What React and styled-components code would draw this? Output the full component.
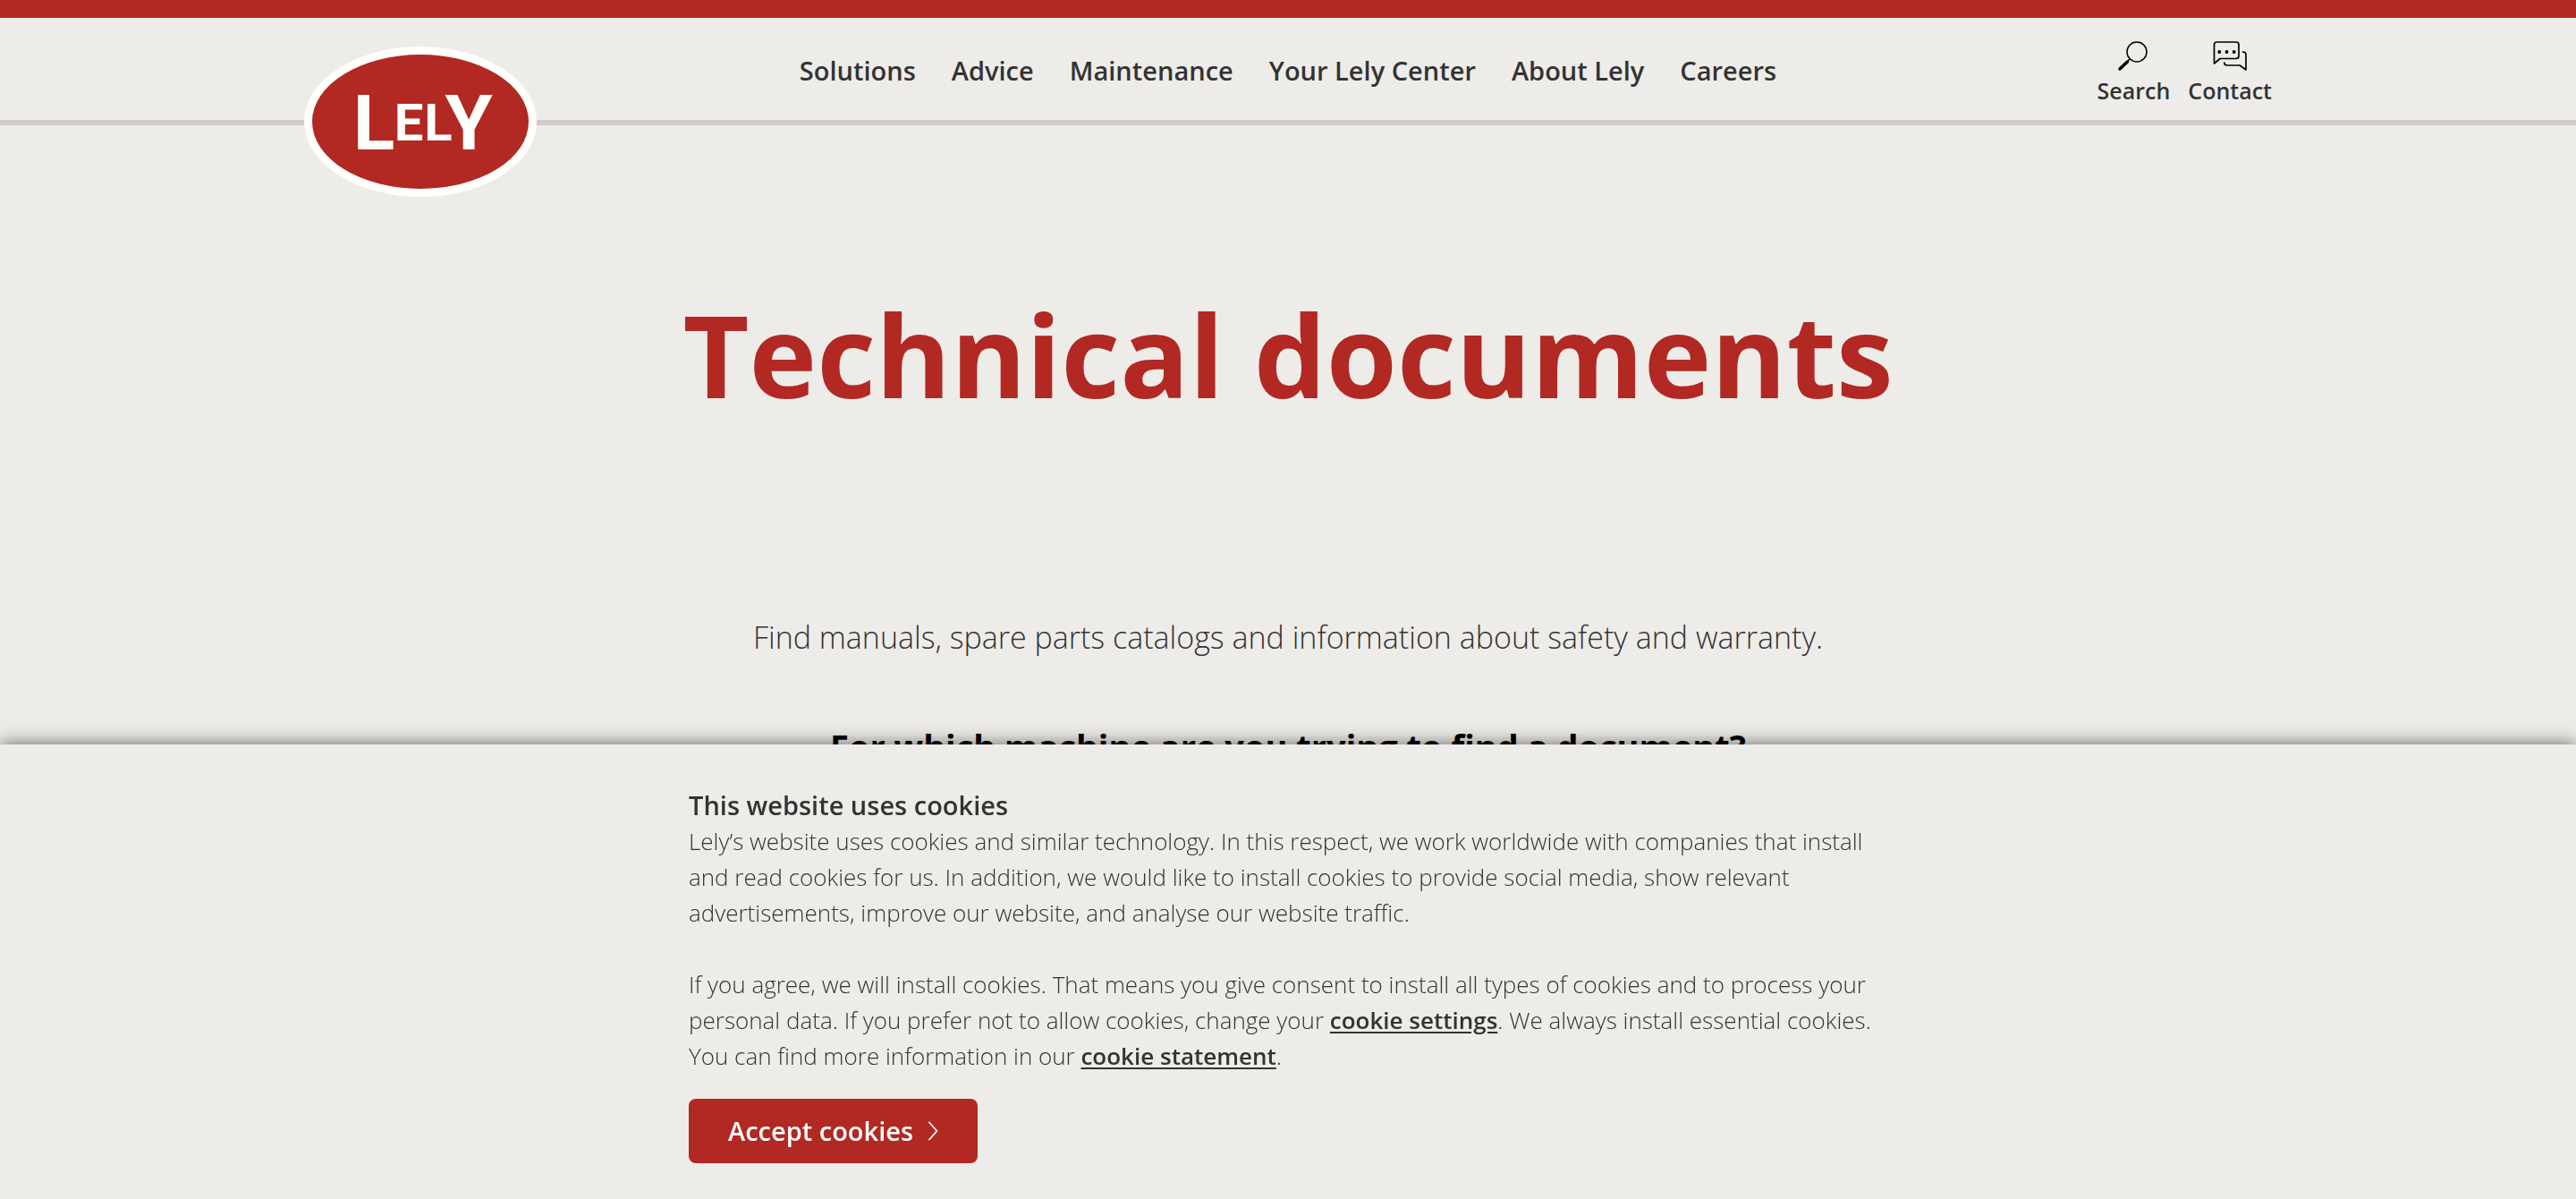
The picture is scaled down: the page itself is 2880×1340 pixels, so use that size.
import React from 'react';
import styled, { createGlobalStyle } from 'styled-components';

const color = {
  red: '#b22822',
  sand: '#eeece8',
  line: '#d0cbca',
  text: '#333333',
  white: '#fffffc',
};

const GlobalStyle = createGlobalStyle`
  *, *::before, *::after { box-sizing: border-box; }
  html { background: ${color.sand}; }
  body {
    margin: 0;
    height: 100vh;
    overflow: hidden;
    color: ${color.text};
    background: ${color.sand};
    font-family: "Open Sans", "Noto Sans", sans-serif;
    font-size: 26px;
    font-weight: 300;
    line-height: 40px;
  }
`;

const Header = styled.header`
  border-top: 20px solid ${color.red};
  border-bottom: 6px solid ${color.line};
`;

const HeaderInner = styled.div`
  display: grid;
  grid-template-columns: 1fr auto 1fr;
  max-width: 2200px;
  margin: 0 auto;
`;

/* The badge hangs over the line under the header. */
const LogoLink = styled.a`
  display: block;
  justify-self: start;
  margin: 32px 0 -86px;
  height: 168px;
`;

const Nav = styled.nav`
  display: flex;
  gap: 40px;
  padding: 39px 0 35px;
`;

const NavLink = styled.a`
  color: inherit;
  font-size: 29px;
  font-weight: 600;
  text-decoration: none;
`;

const Tools = styled.div`
  display: flex;
  justify-self: end;
  align-items: flex-start;
  gap: 20px;
  padding-top: 25px;
`;

const ToolLink = styled.a`
  display: flex;
  flex-direction: column;
  align-items: center;
  color: inherit;
  font-size: 25px;
  font-weight: 600;
  text-decoration: none;

  svg { display: block; }
`;

const Main = styled.main`
  display: flex;
  flex-direction: column;
  align-items: center;
  padding-top: 176px;
  text-align: center;
`;

const PageTitle = styled.h1`
  margin: 0;
  color: ${color.red};
  font-size: 128px;
  font-weight: 700;
  line-height: 160px;
`;

const Lead = styled.p`
  margin: 210px 0 70px;
  font-size: 34px;
  line-height: 52px;
`;

const Question = styled.h2`
  margin: 0;
  color: #000;
  font-size: 38px;
  font-weight: 700;
  line-height: 52px;
`;

const CookieBar = styled.section`
  position: fixed;
  right: 0;
  bottom: 0;
  left: 0;
  padding: 48px 0 40px;
  background: ${color.sand};
  box-shadow: 0 0 20px rgba(0, 0, 0, 0.6);
`;

const CookieInner = styled.div`
  max-width: 1340px;
  margin: 0 auto;
`;

const CookieTitle = styled.h2`
  margin: 0;
  font-size: 29px;
  font-weight: 600;
  line-height: 40px;
`;

const CookieText = styled.p`
  margin: 0;

  & + & { margin-top: 40px; }
`;

const TextLink = styled.a`
  color: inherit;
  font-weight: 600;
  text-decoration: underline;
  text-decoration-thickness: 2px;
  text-underline-offset: 3px;
`;

const AcceptButton = styled.button`
  display: flex;
  align-items: center;
  gap: 16px;
  height: 72px;
  margin-top: 28px;
  padding: 0 44px;
  border: 0;
  border-radius: 8px;
  color: #fff;
  background: ${color.red};
  font-family: inherit;
  font-size: 29px;
  font-weight: 600;
  line-height: 40px;
  cursor: pointer;
`;

function Logo() {
  return (
    <svg width="260" height="168" viewBox="0 0 260 168" role="img" aria-label="Lely">
      <ellipse cx="130" cy="84" rx="130" ry="84" fill={color.white} />
      <ellipse cx="130" cy="84" rx="121" ry="75" fill={color.red} />
      <g fill={color.white} fontFamily="Roboto, sans-serif" fontWeight="700" textAnchor="middle">
        <text x="78" y="115" fontSize="86">L</text>
        <text x="117" y="105" fontSize="58">E</text>
        <text x="150" y="105" fontSize="58">L</text>
        <text x="184" y="115" fontSize="86">Y</text>
      </g>
    </svg>
  );
}

function SearchIcon() {
  return (
    <svg width="36" height="36" viewBox="0 0 36 36" fill="none" stroke="#000" aria-hidden="true">
      <circle cx="22" cy="13" r="11" strokeWidth="1.5" />
      <path d="M3 32 11.500 24" strokeWidth="3.500" strokeLinecap="round" />
      <path d="M11 24.500 14 21" strokeWidth="1.500" />
    </svg>
  );
}

function ContactIcon() {
  return (
    <svg width="38" height="36" viewBox="0 0 38 36" fill="none" stroke="#000" strokeWidth="1.700" strokeLinecap="round" strokeLinejoin="round" aria-hidden="true">
      <path d="M1.500 26V5Q1.500 2 4.500 2H26Q29 2 29 5V17.500Q29 20.500 26 20.500H8Z" />
      <path d="M33.500 13Q37 13 37 16.500V33L30 28H16Q12.800 28 12.800 25" />
      <g fill="#000" stroke="none">
        <circle cx="7.300" cy="13" r="1.900" />
        <circle cx="15.500" cy="13" r="1.900" />
        <circle cx="23.700" cy="13" r="1.900" />
      </g>
    </svg>
  );
}

function Chevron() {
  return (
    <svg width="12" height="22" viewBox="0 0 12 22" fill="none" stroke="#fff" strokeWidth="1.800" strokeLinecap="round" strokeLinejoin="round" aria-hidden="true">
      <path d="M2 1.500 10.500 11 2 20.500" />
    </svg>
  );
}

const navItems = ['Solutions', 'Advice', 'Maintenance', 'Your Lely Center', 'About Lely', 'Careers'];

export default function App() {
  return (
    <>
      <GlobalStyle />
      <Header>
        <HeaderInner>
          <LogoLink href="#"><Logo /></LogoLink>
          <Nav aria-label="Main">
            {navItems.map((item) => <NavLink key={item} href="#">{item}</NavLink>)}
          </Nav>
          <Tools>
            <ToolLink href="#"><SearchIcon />Search</ToolLink>
            <ToolLink href="#"><ContactIcon />Contact</ToolLink>
          </Tools>
        </HeaderInner>
      </Header>
      <Main>
        <PageTitle>Technical documents</PageTitle>
        <Lead>Find manuals, spare parts catalogs and information about safety and warranty.</Lead>
        <Question>For which machine are you trying to find a document?</Question>
      </Main>
      <CookieBar aria-labelledby="cookie-title">
        <CookieInner>
          <CookieTitle id="cookie-title">This website uses cookies</CookieTitle>
          <CookieText>
            Lely’s website uses cookies and similar technology. In this respect, we work worldwide with companies that install
            and read cookies for us. In addition, we would like to install cookies to provide social media, show relevant
            advertisements, improve our website, and analyse our website traffic.
          </CookieText>
          <CookieText>
            If you agree, we will install cookies. That means you give consent to install all types of cookies and to process your
            personal data. If you prefer not to allow cookies, change your <TextLink href="#">cookie settings</TextLink>. We
            always install essential cookies. You can find more information in our <TextLink href="#">cookie statement</TextLink>.
          </CookieText>
          <AcceptButton type="button">Accept cookies<Chevron /></AcceptButton>
        </CookieInner>
      </CookieBar>
    </>
  );
}
